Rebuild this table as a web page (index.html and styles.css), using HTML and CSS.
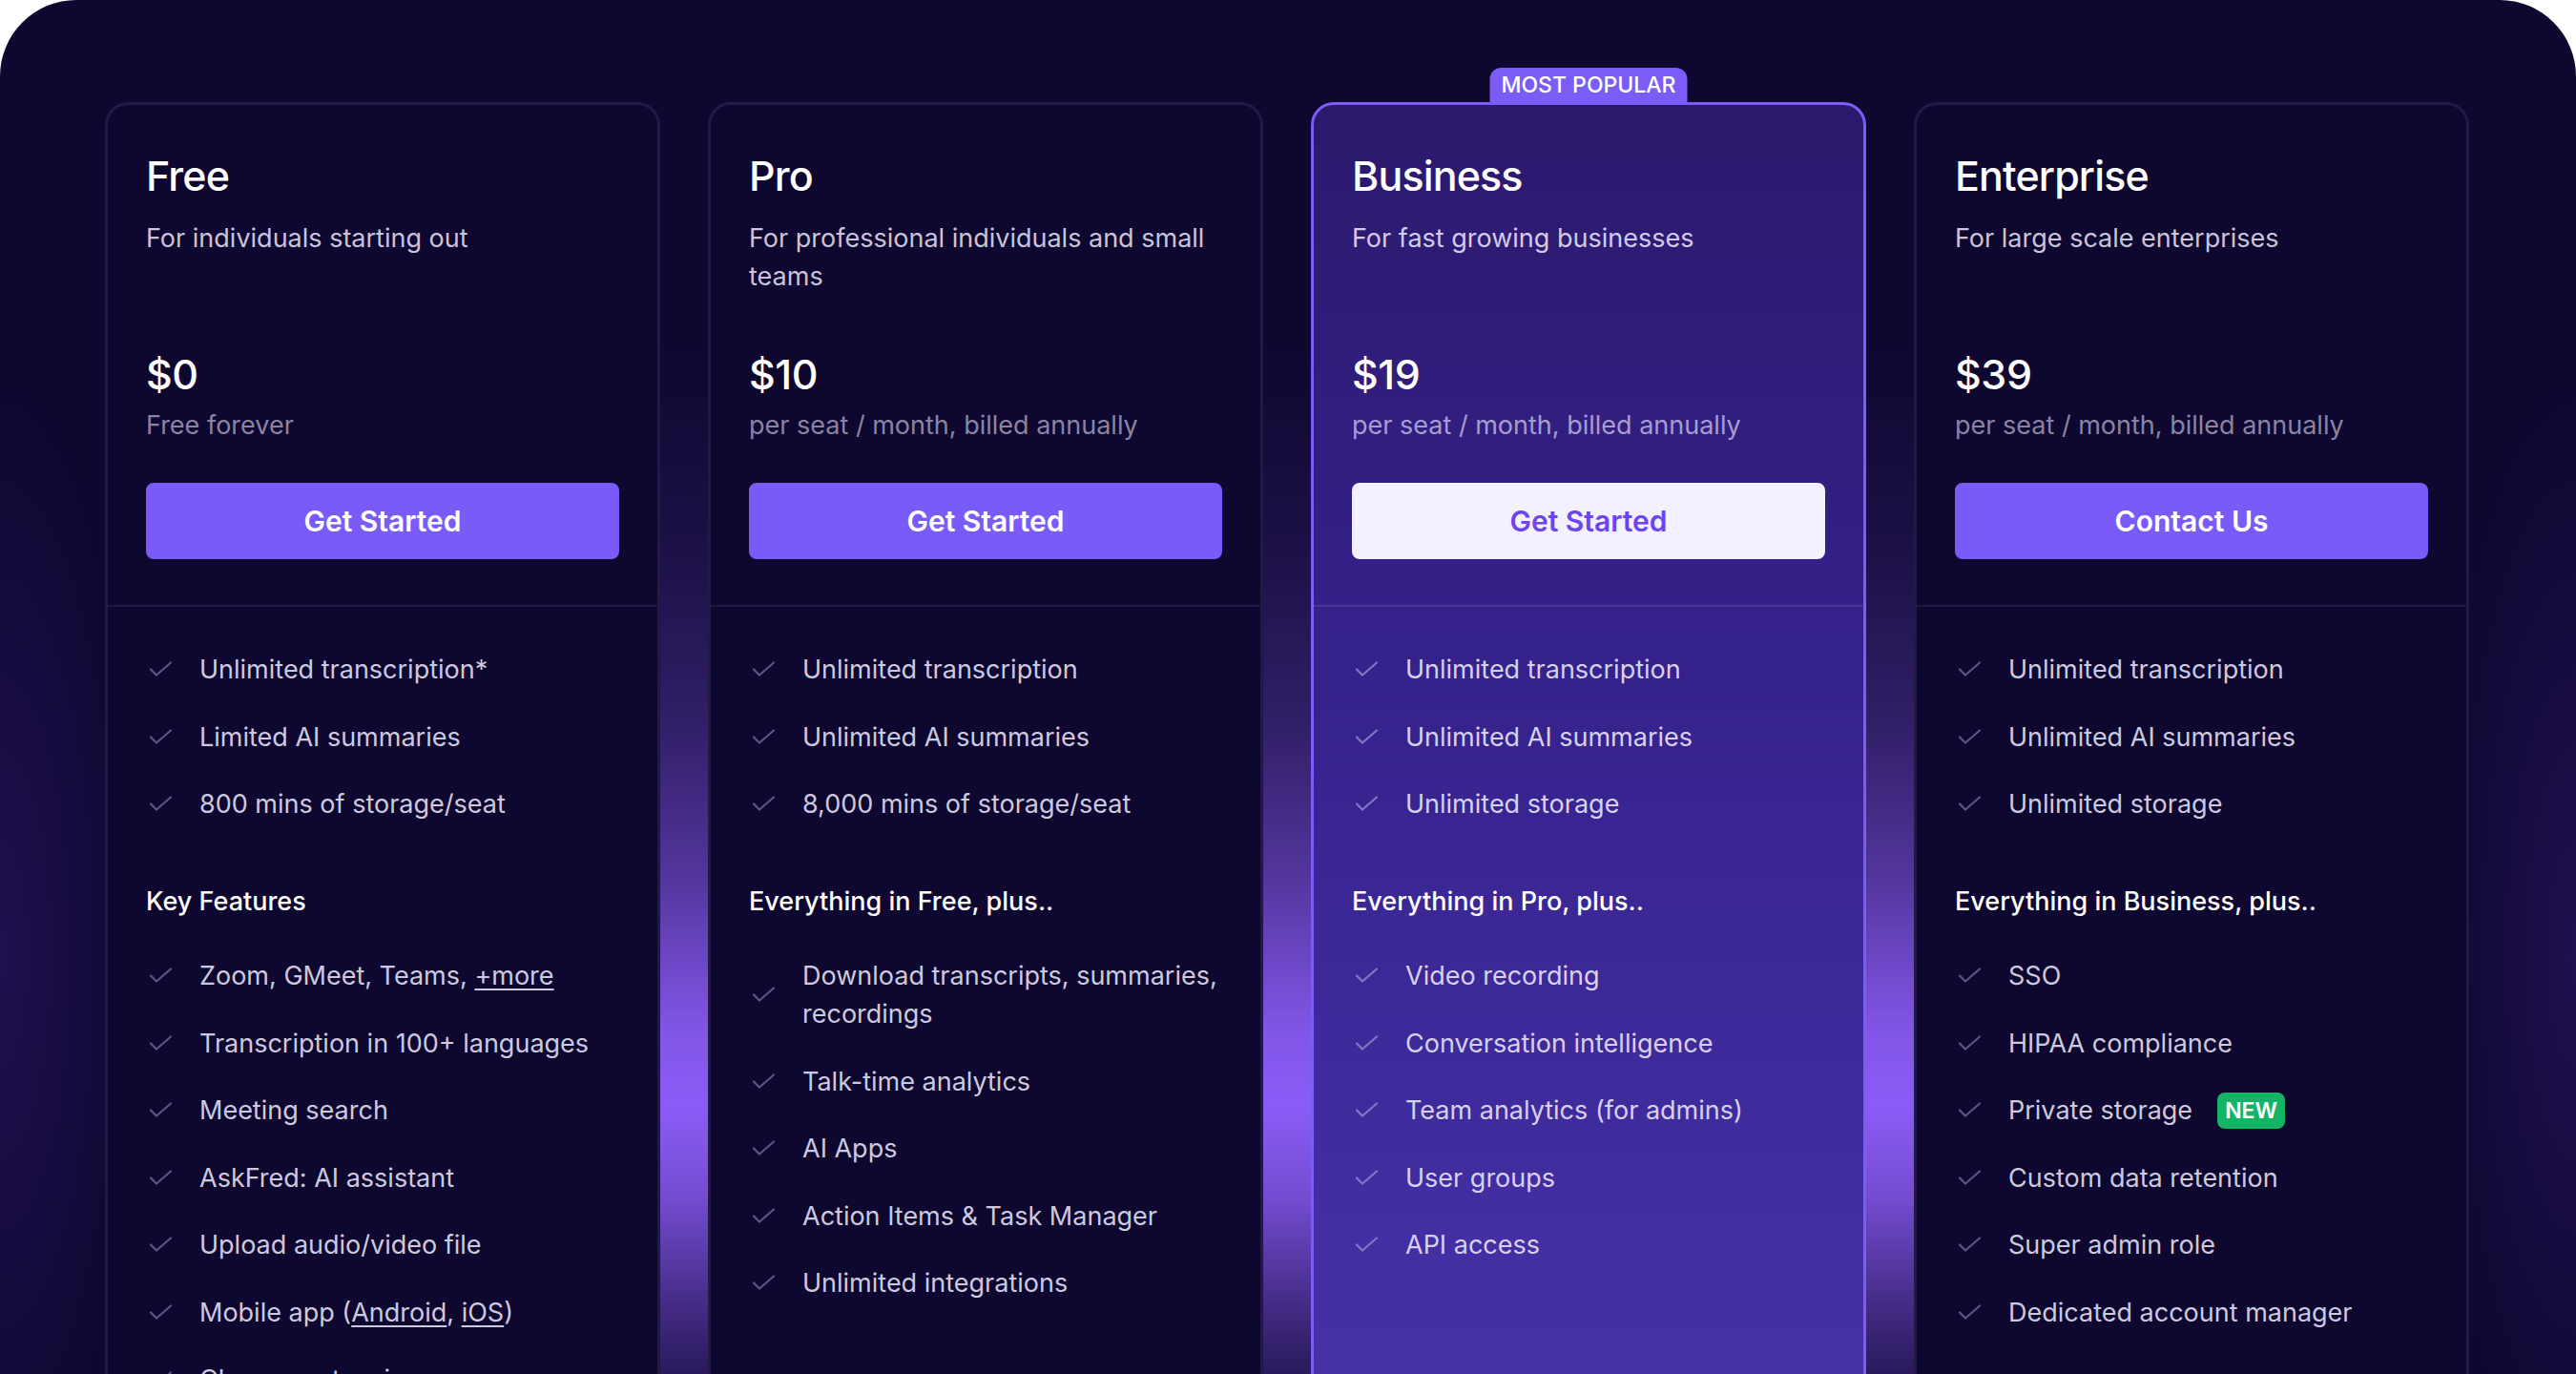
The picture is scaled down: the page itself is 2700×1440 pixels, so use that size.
FILE: index.html
```html
<!DOCTYPE html>
<html lang="en">
<head>
<meta charset="utf-8">
<title>Pricing</title>
<link rel="stylesheet" href="styles.css">
</head>
<body>
<div class="page">
  <div class="plans">
    <section class="card">
      <div class="card-top">
        <h2 class="plan-name">Free</h2>
        <p class="plan-desc">For individuals starting out</p>
        <div class="price">$0</div>
        <div class="price-note">Free forever</div>
        <a class="btn" href="#">Get Started</a>
      </div>
      <div class="card-body">
        <ul class="features">
          <li><svg class="check" viewBox="0 0 28 18"><path d="M5 8.5 L11 14.5 L26 1.5"/></svg><span>Unlimited transcription*</span></li>
          <li><svg class="check" viewBox="0 0 28 18"><path d="M5 8.5 L11 14.5 L26 1.5"/></svg><span>Limited AI summaries</span></li>
          <li><svg class="check" viewBox="0 0 28 18"><path d="M5 8.5 L11 14.5 L26 1.5"/></svg><span>800 mins of storage/seat</span></li>
        </ul>
        <h3 class="group-title">Key Features</h3>
        <ul class="features">
          <li><svg class="check" viewBox="0 0 28 18"><path d="M5 8.5 L11 14.5 L26 1.5"/></svg><span>Zoom, GMeet, Teams, <a href="#">+more</a></span></li>
          <li><svg class="check" viewBox="0 0 28 18"><path d="M5 8.5 L11 14.5 L26 1.5"/></svg><span>Transcription in 100+ languages</span></li>
          <li><svg class="check" viewBox="0 0 28 18"><path d="M5 8.5 L11 14.5 L26 1.5"/></svg><span>Meeting search</span></li>
          <li><svg class="check" viewBox="0 0 28 18"><path d="M5 8.5 L11 14.5 L26 1.5"/></svg><span>AskFred: AI assistant</span></li>
          <li><svg class="check" viewBox="0 0 28 18"><path d="M5 8.5 L11 14.5 L26 1.5"/></svg><span>Upload audio/video file</span></li>
          <li><svg class="check" viewBox="0 0 28 18"><path d="M5 8.5 L11 14.5 L26 1.5"/></svg><span>Mobile app (<a href="#">Android</a>, <a href="#">iOS</a>)</span></li>
          <li><svg class="check" viewBox="0 0 28 18"><path d="M5 8.5 L11 14.5 L26 1.5"/></svg><span>Chrome extension</span></li>
        </ul>
      </div>
    </section>

    <section class="card">
      <div class="card-top">
        <h2 class="plan-name">Pro</h2>
        <p class="plan-desc">For professional individuals and small teams</p>
        <div class="price">$10</div>
        <div class="price-note">per seat / month, billed annually</div>
        <a class="btn" href="#">Get Started</a>
      </div>
      <div class="card-body">
        <ul class="features">
          <li><svg class="check" viewBox="0 0 28 18"><path d="M5 8.5 L11 14.5 L26 1.5"/></svg><span>Unlimited transcription</span></li>
          <li><svg class="check" viewBox="0 0 28 18"><path d="M5 8.5 L11 14.5 L26 1.5"/></svg><span>Unlimited AI summaries</span></li>
          <li><svg class="check" viewBox="0 0 28 18"><path d="M5 8.5 L11 14.5 L26 1.5"/></svg><span>8,000 mins of storage/seat</span></li>
        </ul>
        <h3 class="group-title">Everything in Free, plus..</h3>
        <ul class="features">
          <li><svg class="check" viewBox="0 0 28 18"><path d="M5 8.5 L11 14.5 L26 1.5"/></svg><span>Download transcripts, summaries, recordings</span></li>
          <li><svg class="check" viewBox="0 0 28 18"><path d="M5 8.5 L11 14.5 L26 1.5"/></svg><span>Talk-time analytics</span></li>
          <li><svg class="check" viewBox="0 0 28 18"><path d="M5 8.5 L11 14.5 L26 1.5"/></svg><span>AI Apps</span></li>
          <li><svg class="check" viewBox="0 0 28 18"><path d="M5 8.5 L11 14.5 L26 1.5"/></svg><span>Action Items &amp; Task Manager</span></li>
          <li><svg class="check" viewBox="0 0 28 18"><path d="M5 8.5 L11 14.5 L26 1.5"/></svg><span>Unlimited integrations</span></li>
        </ul>
      </div>
    </section>

    <section class="card card-featured">
      <div class="badge">MOST POPULAR</div>
      <div class="card-top">
        <h2 class="plan-name">Business</h2>
        <p class="plan-desc">For fast growing businesses</p>
        <div class="price">$19</div>
        <div class="price-note">per seat / month, billed annually</div>
        <a class="btn btn-light" href="#">Get Started</a>
      </div>
      <div class="card-body">
        <ul class="features">
          <li><svg class="check" viewBox="0 0 28 18"><path d="M5 8.5 L11 14.5 L26 1.5"/></svg><span>Unlimited transcription</span></li>
          <li><svg class="check" viewBox="0 0 28 18"><path d="M5 8.5 L11 14.5 L26 1.5"/></svg><span>Unlimited AI summaries</span></li>
          <li><svg class="check" viewBox="0 0 28 18"><path d="M5 8.5 L11 14.5 L26 1.5"/></svg><span>Unlimited storage</span></li>
        </ul>
        <h3 class="group-title">Everything in Pro, plus..</h3>
        <ul class="features">
          <li><svg class="check" viewBox="0 0 28 18"><path d="M5 8.5 L11 14.5 L26 1.5"/></svg><span>Video recording</span></li>
          <li><svg class="check" viewBox="0 0 28 18"><path d="M5 8.5 L11 14.5 L26 1.5"/></svg><span>Conversation intelligence</span></li>
          <li><svg class="check" viewBox="0 0 28 18"><path d="M5 8.5 L11 14.5 L26 1.5"/></svg><span>Team analytics (for admins)</span></li>
          <li><svg class="check" viewBox="0 0 28 18"><path d="M5 8.5 L11 14.5 L26 1.5"/></svg><span>User groups</span></li>
          <li><svg class="check" viewBox="0 0 28 18"><path d="M5 8.5 L11 14.5 L26 1.5"/></svg><span>API access</span></li>
        </ul>
      </div>
    </section>

    <section class="card">
      <div class="card-top">
        <h2 class="plan-name">Enterprise</h2>
        <p class="plan-desc">For large scale enterprises</p>
        <div class="price">$39</div>
        <div class="price-note">per seat / month, billed annually</div>
        <a class="btn" href="#">Contact Us</a>
      </div>
      <div class="card-body">
        <ul class="features">
          <li><svg class="check" viewBox="0 0 28 18"><path d="M5 8.5 L11 14.5 L26 1.5"/></svg><span>Unlimited transcription</span></li>
          <li><svg class="check" viewBox="0 0 28 18"><path d="M5 8.5 L11 14.5 L26 1.5"/></svg><span>Unlimited AI summaries</span></li>
          <li><svg class="check" viewBox="0 0 28 18"><path d="M5 8.5 L11 14.5 L26 1.5"/></svg><span>Unlimited storage</span></li>
        </ul>
        <h3 class="group-title">Everything in Business, plus..</h3>
        <ul class="features">
          <li><svg class="check" viewBox="0 0 28 18"><path d="M5 8.5 L11 14.5 L26 1.5"/></svg><span>SSO</span></li>
          <li><svg class="check" viewBox="0 0 28 18"><path d="M5 8.5 L11 14.5 L26 1.5"/></svg><span>HIPAA compliance</span></li>
          <li><svg class="check" viewBox="0 0 28 18"><path d="M5 8.5 L11 14.5 L26 1.5"/></svg><span>Private storage</span><span class="new">NEW</span></li>
          <li><svg class="check" viewBox="0 0 28 18"><path d="M5 8.5 L11 14.5 L26 1.5"/></svg><span>Custom data retention</span></li>
          <li><svg class="check" viewBox="0 0 28 18"><path d="M5 8.5 L11 14.5 L26 1.5"/></svg><span>Super admin role</span></li>
          <li><svg class="check" viewBox="0 0 28 18"><path d="M5 8.5 L11 14.5 L26 1.5"/></svg><span>Dedicated account manager</span></li>
        </ul>
      </div>
    </section>
  </div>
</div>
</body>
</html>
```

FILE: styles.css
```css
html, body {
  margin: 0;
  padding: 0;
  background: #ffffff;
  height: 1440px;
  overflow: hidden;
}

.page {
  box-sizing: border-box;
  width: 2700px;
  min-height: 1440px;
  padding: 107px 112px 0 110px;
  border-radius: 80px 80px 0 0;
  font-family: Inter, "Noto Sans", "Liberation Sans", sans-serif;
  background-color: #0e0730;
  background-image:
    linear-gradient(180deg,
      rgba(139, 92, 246, 0) 360px,
      rgba(139, 92, 246, 0.10) 560px,
      rgba(139, 92, 246, 0.28) 760px,
      rgba(139, 92, 246, 0.55) 920px,
      rgba(139, 92, 246, 0.92) 1080px,
      rgba(139, 92, 246, 1) 1160px,
      rgba(139, 92, 246, 0.80) 1260px,
      rgba(139, 92, 246, 0.45) 1360px,
      rgba(139, 92, 246, 0.22) 1440px),
    radial-gradient(ellipse 200px 800px at 0 1000px, rgba(75, 40, 160, 0.28), rgba(15, 8, 48, 0) 75%),
    radial-gradient(ellipse 200px 800px at 100% 1000px, rgba(75, 40, 160, 0.28), rgba(15, 8, 48, 0) 75%);
  background-size: 1800px 1440px, 100% 100%, 100% 100%;
  background-position: center top, 0 0, 0 0;
  background-repeat: no-repeat;
}

.plans {
  display: grid;
  grid-template-columns: repeat(4, 1fr);
  column-gap: 50px;
  align-items: stretch;
}

.card {
  position: relative;
  border: 3px solid #211a45;
  border-radius: 24px;
  background: #0e0730;
  padding-bottom: 240px;
}

.card-top {
  padding: 48px 40px 48px;
  border-bottom: 2px solid #211a45;
}

.plan-name {
  margin: 0;
  font-size: 43px;
  line-height: 52px;
  font-weight: 500;
  letter-spacing: -0.02em;
  color: #ffffff;
}

.plan-desc {
  margin: 20px 0 0;
  min-height: 80px;
  font-size: 27px;
  line-height: 40px;
  color: #c8c4da;
}

.price {
  margin-top: 56px;
  font-size: 43px;
  line-height: 52px;
  font-weight: 500;
  letter-spacing: -0.01em;
  color: #ffffff;
}

.price-note {
  margin-top: 8px;
  font-size: 27px;
  line-height: 40px;
  color: #8a84a4;
}

.btn {
  display: flex;
  align-items: center;
  justify-content: center;
  height: 80px;
  margin-top: 40px;
  border-radius: 8px;
  background: #7a5af8;
  color: #ffffff;
  font-size: 30px;
  font-weight: 600;
  text-decoration: none;
}

.card-body {
  padding: 46px 40px 0;
}

.features {
  list-style: none;
  margin: 0;
  padding: 0;
  display: flex;
  flex-direction: column;
  gap: 30.5px;
}

.features li {
  display: flex;
  align-items: center;
  gap: 28px;
  font-size: 27px;
  line-height: 40px;
  color: #cdc9df;
}

.features a {
  color: inherit;
  text-decoration: underline;
  text-decoration-thickness: 2px;
  text-underline-offset: 4px;
}

.check {
  flex: 0 0 28px;
  width: 28px;
  height: 18px;
  fill: none;
  stroke: #5d5680;
  stroke-width: 2.2;
  stroke-linecap: round;
  stroke-linejoin: round;
}

.group-title {
  margin: 62px 0 38px;
  font-size: 27px;
  line-height: 40px;
  font-weight: 500;
  color: #ffffff;
}

.new {
  display: inline-block;
  margin-left: -2px;
  padding: 0 8px;
  height: 38px;
  line-height: 38px;
  border-radius: 8px;
  background: #14b467;
  color: #ffffff;
  font-size: 23px;
  font-weight: 600;
}

/* featured card */
.card-featured {
  border-color: #7b5cf6;
  background: linear-gradient(180deg, #2c196c 0%, #35218a 35%, #432ea3 75%, #4a35ad 100%);
}

.card-featured .card-top {
  border-bottom-color: rgba(255, 255, 255, 0.1);
}

.card-featured .plan-desc {
  color: #d2cce9;
}

.card-featured .price-note {
  color: #a69dd2;
}

.card-featured .features li {
  color: #d7d1ee;
}

.card-featured .check {
  stroke: #8576c4;
}

.btn-light {
  background: #f3f1fd;
  color: #6c44f0;
}

.badge {
  position: absolute;
  top: -39px;
  left: 50%;
  transform: translateX(-50%);
  height: 39px;
  padding: 0 12px 3px;
  box-sizing: border-box;
  line-height: 36px;
  border-radius: 12px 12px 0 0;
  background: #7b5cf6;
  color: #ffffff;
  font-size: 23px;
  font-weight: 500;
  white-space: nowrap;
}
```
